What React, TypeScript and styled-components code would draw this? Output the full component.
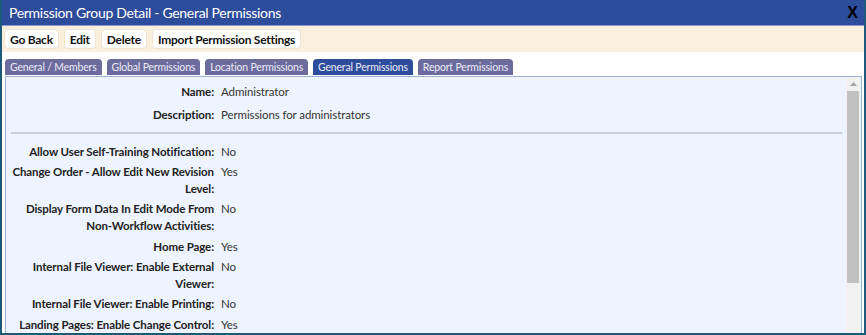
import React from 'react';
import styled, { createGlobalStyle } from 'styled-components';

const GlobalStyle = createGlobalStyle`
  html, body {
    margin: 0;
    padding: 0;
    background: #ffffff;
  }
  body {
    font-family: Lato, "Open Sans", sans-serif;
  }
`;

interface Field {
  label: string;
  value: string;
}

const headerFields: Field[] = [
  { label: 'Name:', value: 'Administrator' },
  { label: 'Description:', value: 'Permissions for administrators' },
];

const permissionFields: Field[] = [
  { label: 'Allow User Self-Training Notification:', value: 'No' },
  { label: 'Change Order - Allow Edit New Revision Level:', value: 'Yes' },
  { label: 'Display Form Data In Edit Mode From Non-Workflow Activities:', value: 'No' },
  { label: 'Home Page:', value: 'Yes' },
  { label: 'Internal File Viewer: Enable External Viewer:', value: 'No' },
  { label: 'Internal File Viewer: Enable Printing:', value: 'No' },
  { label: 'Landing Pages: Enable Change Control:', value: 'Yes' },
];

const tabs = [
  'General / Members',
  'Global Permissions',
  'Location Permissions',
  'General Permissions',
  'Report Permissions',
];

const actions = ['Go Back', 'Edit', 'Delete', 'Import Permission Settings'];

const App: React.FC = () => {
  const activeTab = 'General Permissions';

  return (
    <>
      <GlobalStyle />
      <Frame>
        <TitleBar>
          <Title>Permission Group Detail - General Permissions</Title>
          <CloseButton>X</CloseButton>
        </TitleBar>
        <Toolbar>
          {actions.map(a => (
            <ActionButton key={a}>{a}</ActionButton>
          ))}
        </Toolbar>
        <TabStrip>
          {tabs.map(t => (
            <Tab key={t} active={t === activeTab}>
              {t}
            </Tab>
          ))}
        </TabStrip>
        <Panel>
          <Content>
            <FieldGrid spacing={3}>
              {headerFields.map(f => (
                <React.Fragment key={f.label}>
                  <Label>{f.label}</Label>
                  <Value>{f.value}</Value>
                </React.Fragment>
              ))}
            </FieldGrid>
            <Divider />
            <FieldGrid spacing={1.67}>
              {permissionFields.map(f => (
                <React.Fragment key={f.label}>
                  <Label>{f.label}</Label>
                  <Value>{f.value}</Value>
                </React.Fragment>
              ))}
            </FieldGrid>
          </Content>
          <ScrollTrack>
            <ScrollArrow>
              <svg width="7" height="4" viewBox="0 0 7 4">
                <path d="M0 4 L3.5 0 L7 4 Z" fill="#a3a3a3" />
              </svg>
            </ScrollArrow>
            <ScrollThumb />
          </ScrollTrack>
        </Panel>
      </Frame>
    </>
  );
};

export default App;

const Frame = styled.div`
  width: 866px;
  height: 335px;
  box-sizing: border-box;
  border: 2px solid #1c5a7b;
  border-top: none;
  display: flex;
  flex-direction: column;
  overflow: hidden;
  background: #ffffff;
`;

const TitleBar = styled.div`
  height: 25px;
  flex-shrink: 0;
  background: #2e4c9c;
  display: flex;
  align-items: center;
  justify-content: space-between;
  padding: 0 6px 0 7px;
  border-bottom: 1px solid #8a9ccc;
`;

const Title = styled.div`
  color: #ffffff;
  font-size: 14px;
  letter-spacing: -0.3px;
`;

const CloseButton = styled.div`
  color: #000000;
  font-family: "Liberation Sans", Arial, sans-serif;
  font-weight: bold;
  font-size: 16px;
  cursor: pointer;
`;

const Toolbar = styled.div`
  height: 26px;
  flex-shrink: 0;
  box-sizing: border-box;
  background: #faeedc;
  display: flex;
  align-items: center;
  gap: 5px;
  padding: 0 2px;
`;

const ActionButton = styled.button`
  font-family: inherit;
  font-weight: bold;
  font-size: 12px;
  letter-spacing: -0.25px;
  color: #111111;
  background: #ffffff;
  border: 1px solid #efe4d2;
  border-radius: 4px;
  height: 20px;
  padding: 0 5px;
  cursor: pointer;
`;

const TabStrip = styled.div`
  height: 24px;
  flex-shrink: 0;
  box-sizing: border-box;
  display: flex;
  align-items: flex-end;
  gap: 5px;
  padding: 0 4px 1px 3px;
`;

const Tab = styled.div<{ active: boolean }>`
  height: 16px;
  line-height: 16px;
  padding: 0 5px;
  font-size: 10.45px;
  letter-spacing: -0.15px;
  border-radius: 4px 4px 0 0;
  color: #eceaf6;
  background: ${({ active }) => (active ? '#2e4c9c' : '#6c6b9e')};
  cursor: pointer;
`;

const Panel = styled.div`
  flex: 1;
  min-height: 0;
  margin: 0 2px 0 3px;
  display: flex;
  background: #eef4ff;
  border: 1px solid #9cb0d2;
  border-bottom: none;
`;

const Content = styled.div`
  flex: 1;
  overflow: hidden;
  padding: 3px 4px 0 5px;
`;

const FieldGrid = styled.div<{ spacing: number }>`
  display: grid;
  grid-template-columns: 203px 1fr;
  column-gap: 7px;
  font-size: 11.5px;
  letter-spacing: -0.1px;
  line-height: 17px;

  & > div {
    padding: ${({ spacing }) => spacing}px 0;
  }
`;

const Label = styled.div`
  font-weight: bold;
  text-align: right;
  color: #222222;
`;

const Value = styled.div`
  color: #333333;
`;

const Divider = styled.div`
  height: 2px;
  background: #c9ced8;
  margin: 6px 0 7px;
`;

const ScrollTrack = styled.div`
  width: 14px;
  flex-shrink: 0;
  background: #f1f1f1;
  display: flex;
  flex-direction: column;
  align-items: center;
  margin-right: 1px;
`;

const ScrollArrow = styled.div`
  height: 14px;
  display: flex;
  align-items: center;
  justify-content: center;
`;

const ScrollThumb = styled.div`
  width: 12px;
  height: 192px;
  background: #c1c1c1;
`;
